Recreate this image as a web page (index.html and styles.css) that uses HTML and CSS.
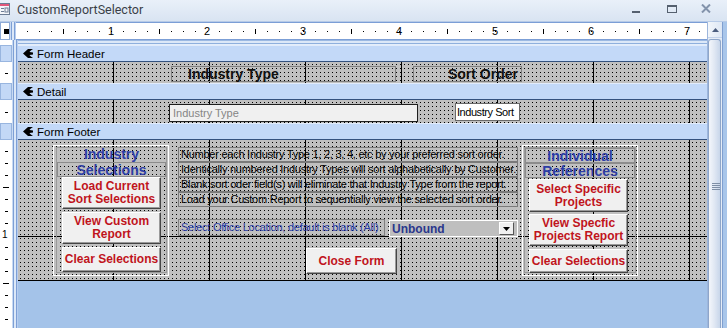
FILE: index.html
```html
<!DOCTYPE html>
<html lang="en">
<head>
    <meta charset="UTF-8">
    <meta name="viewport" content="width=device-width, initial-scale=1.0">
    <title>CustomReportSelector</title>
    <link rel="stylesheet" href="styles.css">
</head>
<body>
<div class="window">
    <div class="titlebar">
        <svg class="app-icon" width="11" height="12" viewBox="0 0 11 12">
            <rect x="0.5" y="0.5" width="10" height="11" fill="#f4f6fa" stroke="#6c7c94"/>
            <rect x="1" y="1" width="9" height="2" fill="#e2577a"/>
            <rect x="2" y="5" width="3" height="1" fill="#6c7c94"/>
            <rect x="2" y="8" width="3" height="1" fill="#6c7c94"/>
            <rect x="6" y="5" width="3" height="4" fill="none" stroke="#6c7c94"/>
        </svg>
        <span class="title">CustomReportSelector</span>
        <div class="win-buttons">
            <svg class="btn-min" width="8" height="3" viewBox="0 0 8 3"><rect y="0" width="8" height="2" fill="#55606f"/></svg>
            <svg class="btn-max" width="10" height="8" viewBox="0 0 10 8"><rect x="0.5" y="0.5" width="9" height="7" fill="none" stroke="#55606f"/><rect x="0" y="0" width="10" height="2" fill="#55606f"/></svg>
            <svg class="btn-close" width="10" height="9" viewBox="0 0 10 9"><path d="M1 0.5 L9 8.5 M9 0.5 L1 8.5" stroke="#8393ab" stroke-width="2"/></svg>
        </div>
    </div>

    <div class="client">
        <div class="designer">
            <div class="ruler-row">
                <div class="corner"><span class="corner-mark"></span></div>
                <div class="sep"></div>
                <div class="hruler">
                    <span>1</span><span>2</span><span>3</span><span>4</span><span>5</span><span>6</span><span>7</span>
                </div>
            </div>
            <div class="band"><div class="band-left"></div><div class="sep"></div><div class="band-fill"></div></div>

            <!-- form header -->
            <div class="bar-row">
                <div class="selector"></div><div class="sep"></div>
                <div class="bar">
                    <svg class="bar-icon" width="10" height="9" viewBox="0 0 10 9"><path d="M0 4.5 L5 0 L10 0 C8.5 1 7 2 6.5 3 L10 3.5 L10 5.5 L6.5 6 C7 7 8.5 8 10 9 L5 9 Z" fill="#000"/></svg>
                    <span>Form Header</span>
                </div>
            </div>
            <div class="grid-row">
                <div class="vruler tick-header"></div><div class="sep"></div>
                <div class="canvas header-canvas">
                    <div class="hdr-label industry-hdr">Industry Type</div>
                    <div class="hdr-label sort-hdr">Sort Order</div>
                </div>
            </div>

            <!-- detail -->
            <div class="bar-row">
                <div class="selector"></div><div class="sep"></div>
                <div class="bar">
                    <svg class="bar-icon" width="10" height="9" viewBox="0 0 10 9"><path d="M0 4.5 L5 0 L10 0 C8.5 1 7 2 6.5 3 L10 3.5 L10 5.5 L6.5 6 C7 7 8.5 8 10 9 L5 9 Z" fill="#000"/></svg>
                    <span>Detail</span>
                </div>
            </div>
            <div class="grid-row">
                <div class="vruler tick-detail"></div><div class="sep"></div>
                <div class="canvas detail-canvas">
                    <div class="textbox industry-box">Industry Type</div>
                    <div class="textbox sort-box">Industry Sort</div>
                </div>
            </div>

            <!-- form footer -->
            <div class="bar-row">
                <div class="selector"></div><div class="sep"></div>
                <div class="bar">
                    <svg class="bar-icon" width="10" height="9" viewBox="0 0 10 9"><path d="M0 4.5 L5 0 L10 0 C8.5 1 7 2 6.5 3 L10 3.5 L10 5.5 L6.5 6 C7 7 8.5 8 10 9 L5 9 Z" fill="#000"/></svg>
                    <span>Form Footer</span>
                </div>
            </div>
            <div class="grid-row">
                <div class="vruler tick-footer"><span class="vnum">1</span></div><div class="sep"></div>
                <div class="canvas footer-canvas">
                    <div class="group">
                        <div class="group-inner">
                            <div class="group-title">Industry</div>
                            <div class="group-title boxed">Selections</div>
                            <button class="cmd cmd-tall">Load Current<br>Sort Selections</button>
                            <button class="cmd cmd-tall">View Custom<br>Report</button>
                            <button class="cmd cmd-short">Clear Selections</button>
                        </div>
                    </div>

                    <div class="middle">
                        <div class="note">Number each Industry Type 1, 2, 3, 4, etc by your preferred sort order.</div>
                        <div class="note">Identically numbered Industry Types will sort alphabetically by Customer.</div>
                        <div class="note">Blank sort oder field(s) will eliminate that Industry Type from the report.</div>
                        <div class="note">Load your Custom Report to sequentially view the selected sort order.</div>
                        <div class="location">
                            <div class="location-label">Select Office Location, default is blank (All)</div>
                            <div class="combo">
                                <span>Unbound</span>
                                <span class="combo-btn"><svg width="7" height="4" viewBox="0 0 7 4"><path d="M0 0 H7 L3.5 4 Z" fill="#000"/></svg></span>
                            </div>
                        </div>
                        <button class="cmd close-btn">Close Form</button>
                    </div>

                    <div class="group group-right">
                        <div class="group-inner">
                            <div class="group-title boxed">Individual</div>
                            <div class="group-title boxed">References</div>
                            <button class="cmd cmd-tall first">Select Specific<br>Projects</button>
                            <button class="cmd cmd-tall">View Specfic<br>Projects Report</button>
                            <button class="cmd cmd-short">Clear Selections</button>
                        </div>
                    </div>
                </div>
            </div>

            <div class="grid-row blank-row">
                <div class="vruler tick-blank"></div><div class="sep"></div>
                <div class="blank"></div>
            </div>
        </div>

        <div class="scrollbar">
            <div class="scroll-up"><svg width="7" height="4" viewBox="0 0 7 4"><path d="M0 4 H7 L3.5 0 Z" fill="#4b5d7e"/></svg></div>
            <div class="thumb"><span class="grip"></span></div>
        </div>
        <div class="frame"></div>
    </div>
</div>
</body>
</html>
```

FILE: styles.css
```css
body {
    margin: 0;
    width: 727px;
    height: 328px;
    overflow: hidden;
    font-family: "Liberation Sans", Arial, sans-serif;
    background: #a4c3e9;
}
.window {
    width: 727px;
    height: 328px;
    display: flex;
    flex-direction: column;
}

/* title bar */
.titlebar {
    height: 21px;
    display: flex;
    align-items: center;
    background: linear-gradient(#e9f0f9, #d9e4f2);
    border-bottom: 1px solid #b7cbe8;
}
.app-icon {
    margin-left: -1px;
    margin-top: -3px;
}
.title {
    font-family: Roboto, "Liberation Sans", sans-serif;
    font-size: 12.5px;
    color: #3a3f48;
    margin-left: 7px;
    margin-top: -2px;
}
.win-buttons {
    margin-left: auto;
    display: flex;
    align-items: flex-start;
    height: 21px;
}
.btn-min { margin-top: 11px; }
.btn-max { margin-top: 5px; margin-left: 27px; }
.btn-close { margin-top: 4px; margin-left: 24px; margin-right: 16px; }

/* client area */
.client {
    flex: 1;
    display: flex;
}
.designer {
    width: 707px;
    display: flex;
    flex-direction: column;
}
.sep {
    width: 6px;
    flex: none;
    background: linear-gradient(90deg, #c8daf3 0 1px, #7d9fd5 1px 2px, #dce8f8 2px 4px, #7d9fd5 4px 5px, #b7cdf0 5px 6px);
}

/* horizontal ruler */
.ruler-row {
    height: 18px;
    display: flex;
}
.corner {
    width: 10px;
    background: #fff;
    border: 1px solid #8eabd8;
}
.corner-mark {
    display: block;
    width: 5px;
    height: 5px;
    background: #000;
    margin: 6px 0 0 3px;
}
.hruler {
    flex: 1;
    background-color: #fff;
    border-top: 1px solid #7b9ed6;
    border-bottom: 1px solid #7b9ed6;
    background-image:
        linear-gradient(90deg, #000 0 1px, transparent 1px),
        linear-gradient(90deg, #000 0 1px, transparent 1px);
    background-size: 12px 1px, 96px 5px;
    background-position: 11px 8px, 47px 6px;
    background-repeat: repeat-x;
    display: flex;
    align-items: center;
    padding-left: 47px;
    font-size: 11px;
}
.hruler span {
    width: 96px;
    flex: none;
    text-align: center;
    line-height: 11px;
}
.band {
    height: 5px;
    display: flex;
}
.band-left {
    width: 12px;
    background: #fff;
}
.band-fill {
    flex: 1;
    background: linear-gradient(#9cb9e2 0 1px, #dce8f8 1px 3px, #8fb0dd 3px 4px, #e4eefb 4px);
}

/* section bars */
.bar-row {
    height: 17px;
    display: flex;
}
.selector {
    width: 10px;
    background: #c3d8f6;
    border: 1px solid #98b5df;
}
.bar {
    flex: 1;
    display: flex;
    align-items: center;
    gap: 4px;
    padding-left: 5px;
    background: #c3d9f8;
    border-top: 1px solid #e2ecfb;
    border-bottom: 1px solid #34527f;
    font-size: 11.5px;
    color: #000;
}

/* section grids */
.grid-row {
    display: flex;
}
.vruler {
    width: 12px;
    flex: none;
    background-color: #fff;
    background-repeat: no-repeat;
}
.tick-header {
    background-image: linear-gradient(#000, #000);
    background-size: 3px 1px;
    background-position: 5px 11px;
}
.tick-detail {
    background-image: linear-gradient(#000, #000);
    background-size: 3px 1px;
    background-position: 5px 12px;
}
.tick-footer {
    background-image:
        linear-gradient(#000 0 1px, transparent 1px),
        linear-gradient(#000 0 1px, transparent 1px);
    background-size: 3px 12px, 6px 96px;
    background-position: 5px 11px, 3px 47px;
    background-repeat: repeat-y;
}
.vnum {
    display: block;
    margin-top: 89px;
    background: #fff;
    font-size: 10px;
    line-height: 12px;
    padding-left: 2px;
}
.tick-blank {
    background-image:
        linear-gradient(#000 0 1px, transparent 1px),
        linear-gradient(#000, #000);
    background-size: 3px 12px, 6px 1px;
    background-position: 5px 2px, 3px 2px;
    background-repeat: repeat-y, no-repeat;
}

.canvas {
    width: 689px;
    flex: none;
    background-color: #c0c0c0;
    background-image:
        repeating-linear-gradient(90deg, transparent 0 95px, #000 95px 96px),
        conic-gradient(at 1px 1px, transparent 270deg, #000 0);
    background-size: auto, 4px 4px;
    background-position: 0 0, 2px 2px;
    display: flex;
    align-items: flex-start;
}
.header-canvas {
    height: 21px;
}
.detail-canvas {
    height: 23px;
}
.footer-canvas {
    border-bottom: 1px solid #000;
    background-image:
        linear-gradient(#000, #000),
        repeating-linear-gradient(90deg, transparent 0 95px, #000 95px 96px),
        conic-gradient(at 1px 1px, transparent 270deg, #000 0);
    background-size: 100% 1px, auto, 4px 4px;
    background-position: 0 96px, 0 0, 2px 2px;
    background-repeat: no-repeat, repeat, repeat;
    padding: 5px 0 0 35px;
    box-sizing: border-box;
    height: 141px;
}
.blank {
    flex: 1;
    height: 47px;
    background: #a4c3e9;
}

/* header labels */
.hdr-label {
    height: 14px;
    margin-top: 4px;
    border: 1px solid #808080;
    font-size: 14px;
    font-weight: bold;
    line-height: 15px;
    color: #111;
    white-space: nowrap;
}
.industry-hdr {
    margin-left: 153px;
    width: 207px;
    padding-left: 16px;
}
.sort-hdr {
    margin-left: 17px;
    width: 104px;
    padding-right: 3px;
    text-align: right;
}

/* detail text boxes */
.textbox {
    height: 16px;
    font-size: 11px;
    line-height: 16px;
    padding-left: 3px;
    white-space: nowrap;
    overflow: hidden;
}
.industry-box {
    margin-left: 151px;
    margin-top: 4px;
    width: 244px;
    background: #f0f0f0;
    border: 1px solid #1e1e1e;
    color: #858585;
}
.sort-box {
    margin-left: 37px;
    margin-top: 3px;
    width: 62px;
    padding-left: 1px;
    background: #fff;
    border: 1px solid #6a6a6a;
    color: #000;
    letter-spacing: -0.45px;
}

/* footer option groups */
.group {
    width: 114px;
    height: 129px;
    border: 1px solid #fff;
    flex: none;
}
.group-inner {
    width: 109px;
    height: 124px;
    margin: 1px 0 0 2px;
    border: 1px solid #9a9a9a;
    display: flex;
    flex-direction: column;
    align-items: flex-start;
}
.group-title {
    width: 100%;
    box-sizing: border-box;
    height: 14px;
    font-size: 14px;
    font-weight: bold;
    line-height: 13px;
    text-align: center;
    color: #2d3da5;
    white-space: nowrap;
}
.group-title.boxed {
    height: 15px;
    border: 1px solid #8c8c8c;
    line-height: 14px;
}
.cmd {
    font-family: "Liberation Sans", Arial, sans-serif;
    font-size: 12px;
    font-weight: bold;
    line-height: 13px;
    color: #c0141c;
    background: #f0f0f0;
    border: 1px solid;
    border-color: #fff #454545 #454545 #fff;
    box-shadow: inset -1px -1px 0 #9a9a9a;
    padding: 0;
    text-align: center;
    flex: none;
    white-space: nowrap;
}
.group .cmd {
    width: 99px;
    margin-left: 5px;
    margin-top: 3px;
}
.group .cmd-tall {
    height: 32px;
}
.group .cmd-short {
    height: 25px;
}
.group-inner .boxed + .cmd {
    margin-top: 0;
}

.group-right {
    margin-left: 4px;
}
.group-right .group-inner {
    margin-left: 1px;
    width: 110px;
}
.group-right .cmd {
    margin-left: 4px;
    margin-top: 2px;
}
.group-right .cmd.first {
    margin-top: 1px;
    height: 33px;
}
.group-right .cmd-short {
    height: 24px;
    margin-top: 3px;
}

/* middle column */
.middle {
    width: 340px;
    margin-left: 9px;
    margin-top: 2px;
    display: flex;
    flex-direction: column;
    align-items: flex-start;
}
.note {
    width: 336px;
    height: 13px;
    border: 1px solid #7a7a7a;
    padding-left: 2px;
    font-size: 11px;
    letter-spacing: -0.25px;
    line-height: 13px;
    color: #000;
    white-space: nowrap;
}
.location {
    display: flex;
    align-items: flex-start;
    margin-top: 12px;
}
.location-label {
    width: 203px;
    height: 15px;
    border: 1px solid #808080;
    padding-left: 2px;
    font-size: 11px;
    letter-spacing: -0.25px;
    line-height: 15px;
    color: #2d3da5;
    white-space: nowrap;
}
.combo {
    width: 125px;
    height: 15px;
    margin-left: 4px;
    margin-top: 1px;
    border: 1px solid #fff;
    background: #bfbfbf;
    display: flex;
    align-items: center;
    padding-left: 2px;
    font-size: 12px;
    font-weight: bold;
    color: #2a378c;
}
.combo-btn {
    margin-left: auto;
    margin-right: 3px;
    width: 13px;
    height: 11px;
    background: #f0f0f0;
    border: 1px solid;
    border-color: #fff #555 #555 #fff;
    display: flex;
    align-items: center;
    justify-content: center;
}
.close-btn {
    width: 91px;
    height: 26px;
    margin-left: 128px;
    margin-top: 11px;
}

/* scrollbar */
.scrollbar {
    width: 15px;
    display: flex;
    flex-direction: column;
    background: #e6edf7;
    border-left: 1px solid #9db6dc;
}
.scroll-up {
    height: 15px;
    display: flex;
    align-items: center;
    justify-content: center;
    background: linear-gradient(90deg, #f2f6fb, #dde7f4);
    border-bottom: 1px solid #c3d3ea;
}
.thumb {
    flex: 1;
    margin: 1px 1px 0 0;
    border: 1px solid #8ea6ca;
    border-bottom: none;
    border-radius: 3px 3px 0 0;
    background: linear-gradient(90deg, #f3f6fb, #e2e9f4 45%, #c8d6ea);
}
.grip {
    display: block;
    width: 8px;
    height: 7px;
    margin: 143px 0 0 3px;
    background: repeating-linear-gradient(#7f8fa6 0 1px, transparent 1px 2px);
}
.frame {
    width: 4px;
    background: #a9c6ea;
    border-left: 1px solid #7f9fd0;
}
```
